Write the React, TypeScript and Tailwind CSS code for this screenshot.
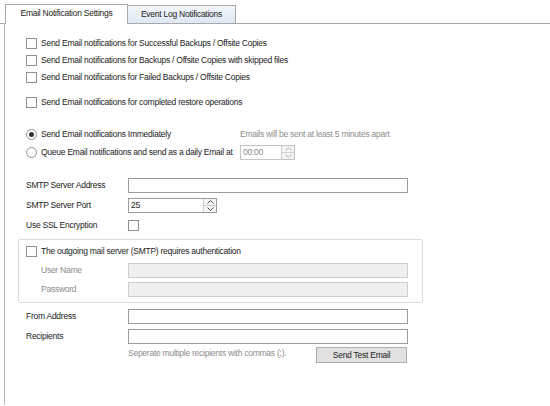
import React from "react";

const font = { fontFamily: '"Liberation Sans", Arial, sans-serif' };

function Check({ className = "" }: { className?: string }) {
  return (
    <span
      className={
        "inline-block w-[11px] h-[11px] border border-[#8f8f8f] bg-white shrink-0 " + className
      }
    />
  );
}

function Radio({ checked }: { checked?: boolean }) {
  return (
    <span className="w-[11px] h-[11px] rounded-full border border-[#8f8f8f] bg-white shrink-0 flex items-center justify-center">
      {checked && <span className="w-[5px] h-[5px] rounded-full bg-[#333]" />}
    </span>
  );
}

function Spinner({ disabled }: { disabled?: boolean }) {
  const c = disabled ? "#b5b5b5" : "#555";
  return (
    <div className="w-[13px] h-full flex flex-col border-l border-[#d0d0d0] bg-[#f4f4f4]">
      <div className="flex-1 flex items-center justify-center border-b border-[#d0d0d0]">
        <svg width="7" height="4" viewBox="0 0 7 4">
          <path d="M0.5 3.5 L3.5 0.5 L6.5 3.5" fill="none" stroke={c} strokeWidth="1" />
        </svg>
      </div>
      <div className="flex-1 flex items-center justify-center">
        <svg width="7" height="4" viewBox="0 0 7 4">
          <path d="M0.5 0.5 L3.5 3.5 L6.5 0.5" fill="none" stroke={c} strokeWidth="1" />
        </svg>
      </div>
    </div>
  );
}

function Label({ children, muted, indent }: { children: React.ReactNode; muted?: boolean; indent?: boolean }) {
  return (
    <div
      className={
        "w-[102px] shrink-0 " +
        (muted ? "text-[#8a8a8a] " : "text-[#222] ") +
        (indent ? "pl-[15px]" : "")
      }
    >
      {children}
    </div>
  );
}

function TextInput({ disabled, w = "w-[280px]" }: { disabled?: boolean; w?: string }) {
  return (
    <div
      className={
        w +
        " h-[15px] border " +
        (disabled ? "border-[#cfcfcf] bg-[#efefef]" : "border-[#9c9c9c] bg-white")
      }
    />
  );
}

export default function App() {
  return (
    <div
      className="w-[550px] h-[406px] bg-white overflow-hidden text-[8.5px] tracking-[-0.25px] leading-[11px] text-[#222] whitespace-nowrap"
      style={font}
    >
      {/* Tab strip */}
      <div className="h-[24px] flex items-end pl-[5px] border-b border-[#a9a9a9]">
        <div className="w-[123px] h-[20px] bg-white border border-b-0 border-[#a9a9a9] -mb-px flex items-center justify-center pb-[2px] relative z-10">
          Email Notification Settings
        </div>
        <div className="w-[108px] h-[18px] border border-l-0 border-b-0 border-[#a9a9a9] bg-gradient-to-b from-[#f2f6fb] to-[#dfe8f3] flex items-center justify-center">
          Event Log Notifications
        </div>
      </div>

      {/* Panel */}
      <div className="ml-[4px] h-[382px] border-l border-[#b8b8b8] pl-[21px] pt-[12px] -mt-px">
        <div className="flex flex-col">
          <div className="h-[17px] flex items-center gap-[4px]">
            <Check />
            <span>Send Email notifications for Successful Backups / Offsite Copies</span>
          </div>
          <div className="h-[17px] flex items-center gap-[4px]">
            <Check />
            <span>Send Email notifications for Backups / Offsite Copies with skipped files</span>
          </div>
          <div className="h-[17px] flex items-center gap-[4px]">
            <Check />
            <span>Send Email notifications for Failed Backups / Offsite Copies</span>
          </div>
          <div className="h-[17px] mt-[8px] flex items-center gap-[4px]">
            <Check />
            <span>Send Email notifications for completed restore operations</span>
          </div>

          {/* Radios */}
          <div className="h-[17px] mt-[15px] flex items-center">
            <div className="w-[214px] flex items-center gap-[4px]">
              <Radio checked />
              <span>Send Email notifications Immediately</span>
            </div>
            <span className="text-[#8c8c8c]">Emails will be sent at least 5 minutes apart</span>
          </div>
          <div className="h-[17px] mt-[1px] flex items-center">
            <div className="w-[214px] flex items-center gap-[4px]">
              <Radio />
              <span>Queue Email notifications and send as a daily Email at</span>
            </div>
            <div className="w-[55px] h-[15px] border border-[#c4c4c4] bg-white flex items-center">
              <span className="flex-1 pl-[2px] text-[#8c8c8c]">00:00</span>
              <Spinner disabled />
            </div>
          </div>

          {/* SMTP */}
          <div className="h-[16px] mt-[16px] flex items-center">
            <Label>SMTP Server Address</Label>
            <TextInput />
          </div>
          <div className="h-[16px] mt-[4px] flex items-center">
            <Label>SMTP Server Port</Label>
            <div className="w-[89px] h-[15px] border border-[#9c9c9c] bg-white flex items-center">
              <span className="flex-1 pl-[2px]">25</span>
              <Spinner />
            </div>
          </div>
          <div className="h-[16px] mt-[4px] flex items-center">
            <Label>Use SSL Encryption</Label>
            <Check />
          </div>

          {/* Auth group */}
          <div className="-ml-[8px] w-[405px] h-[64px] mt-[6px] border border-[#dcdcdc] rounded-[2px] pl-[7px] pt-[3px]">
            <div className="h-[16px] flex items-center gap-[4px]">
              <Check />
              <span>The outgoing mail server (SMTP) requires authentication</span>
            </div>
            <div className="h-[16px] mt-[3px] flex items-center">
              <Label muted indent>User Name</Label>
              <TextInput disabled />
            </div>
            <div className="h-[16px] mt-[3px] flex items-center">
              <Label muted indent>Password</Label>
              <TextInput disabled />
            </div>
          </div>

          <div className="h-[16px] mt-[5px] flex items-center">
            <Label>From Address</Label>
            <TextInput />
          </div>
          <div className="h-[16px] mt-[4px] flex items-center">
            <Label>Recipients</Label>
            <TextInput />
          </div>
          <div className="mt-[3px] flex items-start">
            <div className="w-[102px] shrink-0" />
            <span className="w-[188px] shrink-0 text-[#8c8c8c] pt-[1px]">
              Seperate multiple recipients with commas (;).
            </span>
            <button
              className="w-[91px] h-[16px] border border-[#adadad] bg-[#e1e1e1] text-[#222] flex items-center justify-center tracking-[-0.25px]"
              style={font}
            >
              Send Test Email
            </button>
          </div>
        </div>
      </div>
    </div>
  );
}
